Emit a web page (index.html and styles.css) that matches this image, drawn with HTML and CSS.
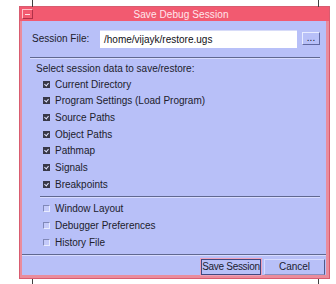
FILE: index.html
```html
<!DOCTYPE html>
<html>
<head>
<meta charset="utf-8">
<link rel="stylesheet" href="styles.css">
</head>
<body>
<div class="tick tick-tl"></div>
<div class="tick tick-tr"></div>
<div class="tick tick-bl"></div>
<div class="tick tick-br"></div>
<div class="window">
  <div class="titlebar">
    <span class="minbox"><span class="dash"></span></span>
    <span class="title">Save Debug Session</span>
  </div>
  <div class="content">
    <div class="filerow">
      <span class="label">Session File:</span>
      <span class="field">/home/vijayk/restore.ugs</span>
      <span class="browse">...</span>
    </div>
    <div class="sep sep1"></div>
    <div class="heading">Select session data to save/restore:</div>
    <div class="group">
      <div class="row"><span class="cb on"></span>Current Directory</div>
      <div class="row"><span class="cb on"></span>Program Settings (Load Program)</div>
      <div class="row"><span class="cb on"></span>Source Paths</div>
      <div class="row"><span class="cb on"></span>Object Paths</div>
      <div class="row"><span class="cb on"></span>Pathmap</div>
      <div class="row"><span class="cb on"></span>Signals</div>
      <div class="row"><span class="cb on"></span>Breakpoints</div>
    </div>
    <div class="sep sep2"></div>
    <div class="group">
      <div class="row"><span class="cb"></span>Window Layout</div>
      <div class="row"><span class="cb"></span>Debugger Preferences</div>
      <div class="row"><span class="cb"></span>History File</div>
    </div>
    <div class="sep sep3"></div>
    <div class="buttons">
      <span class="btn btn-default">Save Session</span>
      <span class="btn btn-cancel">Cancel</span>
    </div>
  </div>
</div>
</body>
</html>
```
FILE: styles.css
```css
html, body {
  margin: 0;
  padding: 0;
  background: #ffffff;
}
body {
  width: 336px;
  height: 284px;
  position: relative;
  overflow: hidden;
  font-family: "Liberation Sans", Arial, sans-serif;
  font-size: 10px;
  color: #20202c;
}
.tick {
  position: absolute;
  width: 1px;
  background: #404040;
}
.tick-tl { left: 32px; top: 0; height: 9px; }
.tick-tr { left: 318px; top: 0; height: 8px; }
.tick-bl { left: 32px; top: 279px; height: 5px; }
.tick-br { left: 318px; top: 279px; height: 5px; }

.window {
  margin: 6px 0 0 19px;
  width: 311px;
  height: 273px;
  background: #ea8c9c;
  display: flex;
  flex-direction: column;
  box-sizing: border-box;
  border: 1px solid #d85c70;
}
.titlebar {
  height: 14px;
  background: #f25a70;
  display: flex;
  align-items: center;
  position: relative;
  flex: none;
}
.minbox {
  width: 9px;
  height: 8px;
  margin-left: 2px;
  border-left: 1px solid #ffc0c8;
  border-top: 1px solid #ffc0c8;
  border-right: 1px solid #b03048;
  border-bottom: 1px solid #b03048;
  display: flex;
  align-items: center;
  justify-content: center;
}
.dash {
  width: 5px;
  height: 1px;
  background: #ffe0e6;
}
.title {
  flex: 1;
  text-align: center;
  color: #ffe6ec;
  letter-spacing: 0.1px;
}
.content {
  flex: 1;
  margin: 0 3px 3px 2px;
  background: #b8c0f8;
  display: flex;
  flex-direction: column;
}
.filerow {
  display: flex;
  align-items: center;
  padding: 9px 0 0 10px;
  height: 17px;
}
.label {
  width: 68px;
}
.field {
  width: 193px;
  height: 17px;
  line-height: 17px;
  background: #ffffff;
  padding-left: 4px;
  color: #101018;
  border-top: 1px solid #d8dcf8;
}
.browse {
  margin-left: 5px;
  width: 16px;
  height: 11px;
  line-height: 9px;
  text-align: center;
  border-top: 1px solid #e8ecff;
  border-left: 1px solid #e8ecff;
  border-right: 1px solid #6068a0;
  border-bottom: 1px solid #6068a0;
  color: #202030;
}
.sep {
  height: 1px;
  background: #606890;
  border-bottom: 1px solid #d8dcff;
  flex: none;
}
.sep1 { margin: 10px 6px 0 8px; }
.heading {
  margin: 3px 0 0 14px;
  height: 14px;
  line-height: 14px;
}
.group {
  display: flex;
  flex-direction: column;
  padding-left: 21px;
}
.group:first-of-type { margin-top: 2px; }
.row {
  height: 16.67px;
  display: flex;
  align-items: center;
}
.cb {
  width: 5px;
  height: 5px;
  margin-right: 5px;
  border-top: 1px solid #8088b8;
  border-left: 1px solid #8088b8;
  border-right: 1px solid #e8ecff;
  border-bottom: 1px solid #e8ecff;
  background: #c4cafa;
  position: relative;
}
.cb.on {
  background: #383848;
  border-color: #383848;
}
.cb.on::after {
  content: "";
  position: absolute;
  left: 1px;
  top: 0px;
  width: 2px;
  height: 3px;
  border-right: 1px solid #e0e4ff;
  border-bottom: 1px solid #e0e4ff;
  transform: rotate(40deg);
}
.sep2 { margin: 3px 6px 3px 18px; }
.sep3 { margin: 3px 0 0 0; }
.buttons {
  display: flex;
  justify-content: flex-end;
  gap: 3px;
  padding: 3px 1px 0 0;
}
.btn {
  height: 14px;
  line-height: 14px;
  text-align: center;
  white-space: nowrap;
  color: #202030;
}
.btn-default {
  width: 58px;
  letter-spacing: -0.3px;
  border: 1px solid #404880;
  outline: 1px solid #f0a0b8;
}
.btn-cancel {
  width: 59px;
  border-top: 1px solid #d8dcff;
  border-left: 1px solid #d8dcff;
  border-right: 1px solid #505888;
  border-bottom: 1px solid #8890c0;
}
```
